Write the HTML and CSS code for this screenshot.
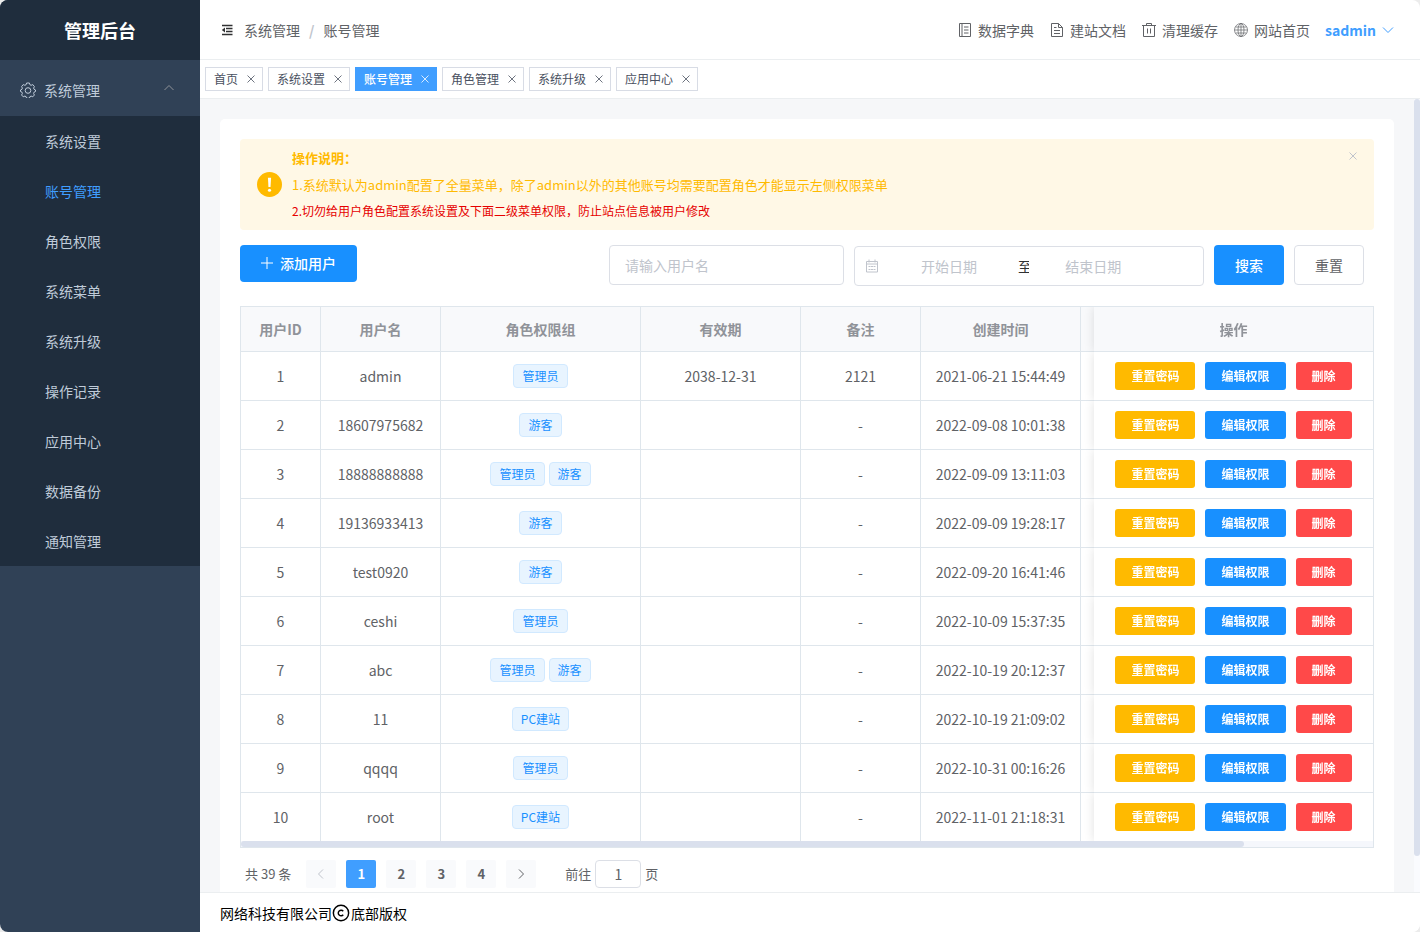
FILE: index.html
```
<!DOCTYPE html>
<html lang="zh-CN">
<head>
  <meta charset="UTF-8" />
  <meta name="viewport" content="width=device-width, initial-scale=1.0"/>
  <title>管理后台 - 账号管理</title>
  <link rel="stylesheet" href="styles.css">
</head>
<body>

  <svg class="sprite" aria-hidden="true">
    <symbol id="close" viewBox="0 0 8 8"><path d="M.5.5l7 7M7.500.5l-7 7"/></symbol>
    <symbol id="left" viewBox="0 0 12 12"><path d="M8 1.500L3.500 6 8 10.500"/></symbol>
    <symbol id="right" viewBox="0 0 12 12"><path d="M4 1.500L8.500 6 4 10.500"/></symbol>
  </svg>

  <div class="app">
    <aside class="sidebar">
      <h1 class="logo">管理后台</h1>
      <nav>
        <button class="menu-title" type="button" aria-expanded="true">
          <svg class="gear" viewBox="0 0 16 16"><path d="M6.600 1h2.800l.5 1.700 1.200.6 1.700-.7 1.600 2-.8 1.500.4 1.100 1.500.8v1.500l-1.500.7-.4 1.200.8 1.600-1.600 1.800-1.700-.7-1.200.6-.5 1.600H6.600l-.5-1.600-1.200-.6-1.700.7-1.600-1.800.8-1.600-.4-1.200L.5 9.500V8L2 7.200l.4-1.100-.8-1.500 1.600-2 1.700.7 1.200-.6z"/><circle cx="8" cy="8.500" r="2.800"/></svg>
          <span>系统管理</span>
          <svg class="arrow" viewBox="0 0 12 12"><path d="M1.500 6L6 1.500 10.500 6"/></svg>
        </button>
        <ul class="submenu">
          <li><a href="#">系统设置</a></li>
          <li><a href="#" class="active">账号管理</a></li>
          <li><a href="#">角色权限</a></li>
          <li><a href="#">系统菜单</a></li>
          <li><a href="#">系统升级</a></li>
          <li><a href="#">操作记录</a></li>
          <li><a href="#">应用中心</a></li>
          <li><a href="#">数据备份</a></li>
          <li><a href="#">通知管理</a></li>
        </ul>
      </nav>
    </aside>

    <div class="container">
      <header class="navbar">
        <button class="fold" type="button" aria-label="收起菜单">
          <svg viewBox="0 0 12 12"><path d="M1 1.500h10.500M5 4.500h6.500M5 7.500h6.500M1 10.500h10.500"/><path class="solid" d="M4 3.500v5L.8 6z"/></svg>
        </button>
        <div class="breadcrumb">
          <a href="#">系统管理</a><span class="slash">/</span><span>账号管理</span>
        </div>
        <div class="nav-links">
          <a href="#"><svg viewBox="0 0 14 14"><path d="M1.500.5h11v13h-11zM4 .5v13M6 4h4.500M6 7h4.500M6 10h4.500"/></svg>数据字典</a>
          <a href="#"><svg viewBox="0 0 14 14"><path d="M1.500.5h7l4 4v9h-11zM8.500.5v4h4M4 4.500h2.500M4 7.500h6M4 10.500h6"/></svg>建站文档</a>
          <a href="#"><svg viewBox="0 0 14 14"><path d="M0 2.500h14M4.500 2.500v-2h5v2M1.500 2.500v11h11v-11M5.500 5.500v5M8.500 5.500v5"/></svg>清理缓存</a>
          <a href="#"><svg class="globe" viewBox="0 0 14 14"><circle cx="7" cy="7" r="6.500"/><ellipse cx="7" cy="7" rx="3" ry="6.500"/><path d="M7 .5v13M1.500 4h11M.5 7h13M1.500 10h11"/></svg>网站首页</a>
        </div>
        <button class="user" type="button">sadmin <svg viewBox="0 0 12 12"><path d="M1 3.500l5 5 5-5"/></svg></button>
      </header>

      <nav class="tags">
        <a href="#" class="tag-view">首页<svg><use href="#close"/></svg></a>
        <a href="#" class="tag-view">系统设置<svg><use href="#close"/></svg></a>
        <a href="#" class="tag-view active">账号管理<svg><use href="#close"/></svg></a>
        <a href="#" class="tag-view">角色管理<svg><use href="#close"/></svg></a>
        <a href="#" class="tag-view">系统升级<svg><use href="#close"/></svg></a>
        <a href="#" class="tag-view">应用中心<svg><use href="#close"/></svg></a>
      </nav>

      <div class="scroll">
        <main class="main">
          <div class="card">
            <div class="alert">
              <svg class="alert-icon" viewBox="0 0 24 24"><circle cx="12" cy="12" r="12"/><path d="M10.500 5.500h3l-.5 9h-2z"/><circle class="dot" cx="12" cy="17.500" r="1.500"/></svg>
              <div class="alert-text">
                <strong>操作说明：</strong>
                <p>1.系统默认为admin配置了全量菜单，除了admin以外的其他账号均需要配置角色才能显示左侧权限菜单</p>
                <p class="warn">2.切勿给用户角色配置系统设置及下面二级菜单权限，防止站点信息被用户修改</p>
              </div>
              <button class="alert-close" type="button" aria-label="关闭"><svg><use href="#close"/></svg></button>
            </div>

            <div class="toolbar">
              <button class="btn primary add" type="button"><svg viewBox="0 0 12 12"><path d="M6 0v12M0 6h12"/></svg>添加用户</button>
              <form class="filters">
                <input class="name-input" type="text" placeholder="请输入用户名" aria-label="用户名">
                <div class="date-range">
                  <svg viewBox="0 0 14 14"><path d="M1.500 2.500h11v10.500h-11zM1.500 5h11M4 .5v3M10 .5v3M3.500 7.500h2M6 7.500h2M8.500 7.500h2M3.500 10.500h2M6 10.500h2M8.500 10.500h2"/></svg>
                  <input type="text" placeholder="开始日期" aria-label="开始日期">
                  <span>至</span>
                  <input type="text" placeholder="结束日期" aria-label="结束日期">
                </div>
                <button class="btn primary" type="button">搜索</button>
                <button class="btn plain" type="reset">重置</button>
              </form>
            </div>

            <div class="table-box">
              <div class="table-scroll">
                <table>
                  <colgroup>
                    <col class="w80"><col class="w120"><col class="w200"><col class="w160"><col class="w120"><col class="w160"><col><col class="w280">
                  </colgroup>
                  <thead>
                    <tr><th>用户ID</th><th>用户名</th><th>角色权限组</th><th>有效期</th><th>备注</th><th>创建时间</th><th></th><th class="fixed">操作</th></tr>
                  </thead>
                  <tbody id="userRows"></tbody>
                </table>
              </div>
              <div class="hbar"><div class="hbar-thumb"></div></div>
            </div>

            <div class="pagination">
              <span class="total">共 39 条</span>
              <button type="button" disabled aria-label="上一页"><svg><use href="#left"/></svg></button>
              <button type="button" class="current">1</button>
              <button type="button">2</button>
              <button type="button">3</button>
              <button type="button">4</button>
              <button type="button" aria-label="下一页"><svg><use href="#right"/></svg></button>
              <label class="jump">前往<input type="text" value="1">页</label>
            </div>
          </div>
        </main>
        <div class="vbar"><div class="vbar-thumb"></div></div>
      </div>

      <footer class="footer">网络科技有限公司<svg viewBox="0 0 16 16"><circle cx="8" cy="8" r="6.800"/><path d="M10 6.400A2.500 2.500 0 1 0 10 9.600"/></svg>底部版权</footer>
    </div>
  </div>

  <script>
    const users = [
      ["admin", ["管理员"], "2038-12-31", "2121", "2021-06-21 15:44:49"],
      ["18607975682", ["游客"], "", "-", "2022-09-08 10:01:38"],
      ["18888888888", ["管理员", "游客"], "", "-", "2022-09-09 13:11:03"],
      ["19136933413", ["游客"], "", "-", "2022-09-09 19:28:17"],
      ["test0920", ["游客"], "", "-", "2022-09-20 16:41:46"],
      ["ceshi", ["管理员"], "", "-", "2022-10-09 15:37:35"],
      ["abc", ["管理员", "游客"], "", "-", "2022-10-19 20:12:37"],
      ["11", ["PC建站"], "", "-", "2022-10-19 21:09:02"],
      ["qqqq", ["管理员"], "", "-", "2022-10-31 00:16:26"],
      ["root", ["PC建站"], "", "-", "2022-11-01 21:18:31"],
    ];

    // Fill the user table
    document.getElementById("userRows").innerHTML = users.map(([name, roles, expire, remark, created], i) => `
      <tr>
        <td>${i + 1}</td>
        <td>${name}</td>
        <td><div class="roles">${roles.map(r => `<span class="role">${r}</span>`).join("")}</div></td>
        <td>${expire}</td>
        <td>${remark}</td>
        <td>${created}</td>
        <td></td>
        <td class="fixed"><div class="actions">
          <button class="mini warning" type="button">重置密码</button>
          <button class="mini primary" type="button">编辑权限</button>
          <button class="mini danger" type="button">删除</button>
        </div></td>
      </tr>
    `).join("");
  </script>
</body>
</html>
```
FILE: styles.css
```
* {
  box-sizing: border-box;
}

body {
  margin: 0;
  background-color: #ececec;
  color: #606266;
  font-family: "Noto Sans CJK SC", sans-serif;
  font-size: 14px;
  line-height: 20px;
}

h1, p, ul {
  margin: 0;
  padding: 0;
}

a {
  color: inherit;
  text-decoration: none;
}

button, input {
  font: inherit;
  color: inherit;
  margin: 0;
  padding: 0;
  border: 0;
  background: none;
}

button {
  cursor: pointer;
}

input {
  outline: none;
}

svg {
  fill: none;
  stroke: currentColor;
  flex: none;
}

.sprite {
  display: none;
}

.app {
  display: flex;
  height: 100vh;
  overflow: hidden;
  border-radius: 8px;
  background-color: #fff;
}

/* sidebar */
.sidebar {
  flex: none;
  width: 200px;
  background-color: #304156;
  color: #bfcbd9;
}

.logo {
  background-color: #1f2d3d;
  color: #fff;
  font-size: 18px;
  line-height: 60px;
  text-align: center;
}

.menu-title {
  display: flex;
  align-items: center;
  gap: 8px;
  width: 100%;
  height: 56px;
  padding: 4px 25px 0 20px;
}

.gear {
  width: 16px;
  height: 16px;
}

.arrow {
  width: 12px;
  height: 12px;
  margin-left: auto;
  color: #909399;
}

.submenu {
  list-style-type: none;
  background-color: #1f2d3d;
}

.submenu a {
  display: block;
  padding-left: 45px;
  line-height: 50px;
}

.submenu .active {
  color: #409eff;
}

/* top bar */
.container {
  flex: 1;
  min-width: 0;
  display: flex;
  flex-direction: column;
}

.navbar {
  display: flex;
  align-items: center;
  height: 60px;
  padding: 0 26px 0 21px;
  border-bottom: 1px solid #ebeef0;
}

.fold {
  display: flex;
  margin-right: 11px;
  color: #303133;
}

.fold svg {
  width: 12px;
  height: 12px;
  stroke-width: 1.3;
}

.solid {
  fill: currentColor;
  stroke: none;
}

.slash {
  margin: 0 9px;
  color: #c0c4cc;
  font-weight: bold;
}

.nav-links {
  display: flex;
  gap: 16px;
  margin-left: auto;
}

.nav-links a {
  display: flex;
  align-items: center;
  gap: 6px;
}

.nav-links svg {
  width: 14px;
  height: 14px;
}

.nav-links .globe {
  stroke-width: 0.7;
}

.user {
  display: flex;
  align-items: center;
  gap: 6px;
  margin-left: 15px;
  color: #409eff;
  font-weight: bold;
}

.user svg {
  width: 12px;
  height: 12px;
}

.tags {
  display: flex;
  gap: 5px;
  padding: 7px 5px;
  border-bottom: 1px solid #ebeef0;
}

.tag-view {
  display: flex;
  align-items: center;
  height: 24px;
  padding: 0 7px 0 8px;
  border: 1px solid #d8dce5;
  color: #495060;
  font-size: 12px;
}

.tag-view svg {
  width: 8px;
  height: 8px;
  margin-left: 9px;
  stroke-width: 0.8;
}

.tag-view.active {
  border-color: #409eff;
  background-color: #409eff;
  color: #fff;
  font-weight: 500;
}

/* page */
.scroll {
  flex: 1;
  min-height: 0;
  display: flex;
  background-color: #f6f7f9;
}

.main {
  flex: 1;
  min-width: 0;
  overflow: hidden;
  padding: 20px 20px 0;
}

.vbar {
  width: 6px;
  background-color: #fafbfe;
}

.vbar-thumb {
  height: 95.5%;
  border-radius: 3px;
  background-color: #dae0ed;
}

.card {
  padding: 20px;
  border-radius: 5px;
  background-color: #fff;
}

.alert {
  display: flex;
  align-items: center;
  gap: 10px;
  padding: 8px 17px;
  border-radius: 4px;
  background-color: #fff8e6;
  color: #ffba00;
  font-size: 13px;
}

.alert-icon {
  width: 25px;
  height: 25px;
  fill: #ffba00;
  stroke: none;
}

.alert-icon path, .alert-icon .dot {
  fill: #fff;
}

.alert-text {
  flex: 1;
  line-height: 22px;
}

.alert-text p {
  margin-top: 5px;
}

.alert-text .warn {
  margin-top: 4px;
  color: #e60000;
  font-size: 12px;
}

.alert-close {
  align-self: flex-start;
  display: flex;
  padding-top: 5px;
  color: #c0c4cc;
}

.alert-close svg {
  width: 8px;
  height: 8px;
}

.toolbar {
  display: flex;
  align-items: flex-start;
  justify-content: space-between;
  margin: 15px 0 21px;
}

.btn {
  width: 70px;
  height: 40px;
  border-radius: 4px;
  font-weight: 500;
}

.primary {
  background-color: #1890ff;
  color: #fff;
}

.add {
  display: flex;
  align-items: center;
  justify-content: center;
  gap: 7px;
  width: 117px;
  height: 37px;
  padding-bottom: 1px;
}

.add svg {
  width: 12px;
  height: 12px;
}

.plain {
  border: 1px solid #dcdfe6;
  font-weight: normal;
}

.filters {
  display: flex;
  gap: 10px;
  margin-right: 10px;
}

.name-input, .date-range {
  height: 40px;
  border: 1px solid #dcdfe6;
  border-radius: 4px;
}

.name-input {
  width: 235px;
  padding: 0 15px;
}

.date-range {
  display: flex;
  align-items: center;
  width: 350px;
  margin-top: 1px;
  padding: 0 10px;
}

.date-range svg {
  width: 14px;
  height: 14px;
  margin-right: 6px;
  color: #c0c4cc;
}

.date-range input {
  width: 39%;
  text-align: center;
  background-color: #fff;
}

.date-range span {
  width: 5%;
  padding-left: 5px;
  color: #303133;
  white-space: nowrap;
}

::placeholder {
  color: #c0c4cc;
  opacity: 1;
}

/* user table */
.toolbar + .table-box {
  margin-top: -1px;
}

.table-box {
  border: 1px solid #dfe6ec;
}

.table-scroll {
  overflow: hidden;
}

table {
  width: 100%;
  min-width: 1280px;
  table-layout: fixed;
  border-collapse: separate;
  border-spacing: 0;
  text-align: center;
}

.w80 { width: 80px; }
.w120 { width: 120px; }
.w160 { width: 160px; }
.w200 { width: 200px; }
.w280 { width: 279px; }

th, td {
  height: 49px;
  padding: 0;
  border-right: 1px solid #dfe6ec;
  border-bottom: 1px solid #dfe6ec;
}

td {
  padding-bottom: 1px;
}

th {
  height: 45px;
  background-color: #f8f9fb;
  color: #909399;
}

tr:last-child td {
  height: 48px;
  border-bottom: 0;
}

.fixed {
  position: sticky;
  right: 0;
  border-right: 0;
  box-shadow: 0 0 10px rgba(0, 0, 0, 0.12);
  clip-path: inset(0 0 0 -12px);
}

td.fixed {
  padding: 0;
  background-color: #fff;
}

.roles {
  display: flex;
  justify-content: center;
  gap: 4px;
  padding-top: 1px;
}

.role {
  height: 24px;
  padding: 0 8px;
  border: 1px solid #d1e9ff;
  border-radius: 4px;
  background-color: #e8f4ff;
  color: #1890ff;
  font-size: 12px;
  line-height: 22px;
}

.actions {
  display: flex;
  justify-content: center;
  gap: 10px;
}

.mini {
  height: 28px;
  padding: 0 16px;
  border-radius: 3px;
  color: #fff;
  font-size: 12px;
  font-weight: bold;
}

.warning {
  background-color: #ffba00;
}

.danger {
  background-color: #ff4949;
}

.hbar {
  height: 6px;
  background-color: #f5f7fc;
}

.hbar-thumb {
  width: 88.6%;
  height: 6px;
  border-radius: 3px;
  background-color: #dae0ed;
}

.pagination {
  display: flex;
  align-items: center;
  gap: 10px;
  margin-top: 12px;
  padding: 0 5px;
  font-size: 13px;
}

.total {
  margin-right: 5px;
}

.pagination button {
  display: flex;
  align-items: center;
  justify-content: center;
  width: 30px;
  height: 28px;
  border-radius: 2px;
  background-color: #f9fafc;
  font-weight: bold;
}

.pagination button:disabled {
  color: #c0c4cc;
}

.pagination .current {
  background-color: #409eff;
  color: #fff;
}

.pagination svg {
  width: 12px;
  height: 12px;
}

.jump {
  display: flex;
  align-items: center;
  gap: 4px;
  margin-left: 19px;
}

.jump input {
  width: 46px;
  height: 28px;
  border: 1px solid #dcdfe6;
  border-radius: 4px;
  font-size: 14px;
  text-align: center;
}

.footer {
  display: flex;
  align-items: center;
  height: 40px;
  padding: 0 20px;
  border-top: 1px solid #ebeef0;
  background-color: #fff;
  color: #000;
}

.footer svg {
  width: 18px;
  height: 18px;
  margin-right: 1px;
  stroke-width: 1.3;
}
```
